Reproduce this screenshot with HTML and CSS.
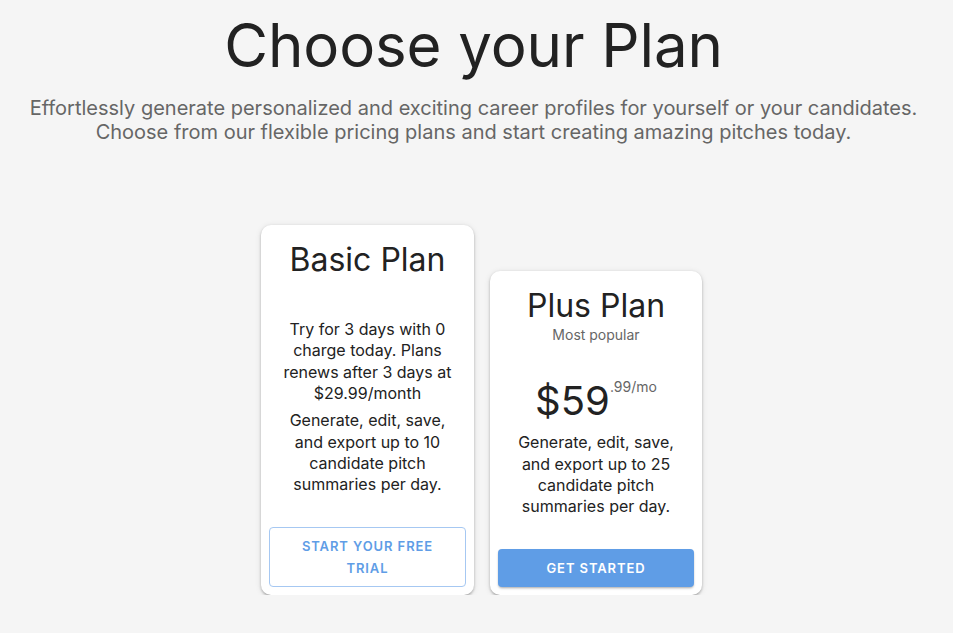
FILE: index.html
```html
<!DOCTYPE html>
<html lang="en">
<head>
<meta charset="utf-8">
<title>Choose your Plan</title>
<link rel="stylesheet" href="styles.css">
</head>
<body>
<main class="page">
  <h1 class="title">Choose your Plan</h1>
  <p class="subtitle">Effortlessly generate personalized and exciting career profiles for yourself or your candidates.<br>Choose from our flexible pricing plans and start creating amazing pitches today.</p>
  <section class="plans">
    <div class="card">
      <div class="card-content">
        <h2 class="plan-name">Basic Plan</h2>
        <p class="desc basic-first">Try for 3 days with 0 charge today. Plans renews after 3 days at $29.99/month</p>
        <p class="desc">Generate, edit, save, and export up to 10 candidate pitch summaries per day.</p>
      </div>
      <div class="card-actions">
        <button class="btn btn-outlined">START YOUR FREE TRIAL</button>
      </div>
    </div>
    <div class="card">
      <div class="card-content">
        <h2 class="plan-name">Plus Plan</h2>
        <div class="popular">Most popular</div>
        <div class="price"><span class="amount">$59</span><span class="cents">.99/mo</span></div>
        <p class="desc">Generate, edit, save, and export up to 25 candidate pitch summaries per day.</p>
      </div>
      <div class="card-actions">
        <button class="btn btn-contained">GET STARTED</button>
      </div>
    </div>
  </section>
</main>
</body>
</html>
```
FILE: styles.css
```css
html, body {
  margin: 0;
  padding: 0;
  background: #f5f5f5;
}
body {
  font-family: Inter, "Noto Sans", sans-serif;
  color: #212121;
}
.page {
  padding: 9px 6px 0 0;
  text-align: center;
}
.title {
  margin: 0;
  font-size: 60px;
  line-height: 72px;
  font-weight: 400;
  letter-spacing: -0.1px;
  color: #222;
}
.subtitle {
  margin: 15px 0 0;
  font-size: 20px;
  line-height: 24px;
  color: #666;
}
.plans {
  display: flex;
  justify-content: center;
  align-items: flex-end;
  gap: 16px;
  margin-top: 81px;
  padding-left: 16px;
}
.card {
  width: 213px;
  background: #fff;
  border-radius: 10px;
  box-shadow: 0 2px 3px -1px rgba(0,0,0,0.25), 0 1px 3px 0 rgba(0,0,0,0.14), 0 1px 6px 0 rgba(0,0,0,0.10);
  display: flex;
  flex-direction: column;
}
.card + .card { width: 212px; }
.card-content {
  padding: 16px 16px 23px;
}
.plan-name {
  margin: 0;
  font-size: 32px;
  line-height: 38px;
  font-weight: 400;
  color: #222;
}
.desc {
  margin: 0;
  font-size: 16px;
  line-height: 21.33px;
  color: #222;
}
.basic-first {
  margin-top: 40px;
  margin-bottom: 6px;
}
.popular {
  font-size: 14px;
  line-height: 20px;
  color: #666;
}
.price {
  margin: 28px 0 3px;
  height: 56px;
  display: flex;
  justify-content: center;
  align-items: flex-start;
}
.amount {
  font-size: 40px;
  line-height: 56px;
  color: #222;
}
.cents {
  font-size: 14px;
  line-height: 20px;
  color: #666;
  margin-top: 4px;
}
.card-actions {
  padding: 8px;
  display: flex;
}
.btn {
  flex: 1;
  font-family: Inter, "Noto Sans", sans-serif;
  font-size: 13px;
  font-weight: 600;
  letter-spacing: 0.9px;
  line-height: 22px;
  border-radius: 4px;
  cursor: pointer;
}
.btn-outlined {
  background: #fff;
  color: #5f9de6;
  border: 1px solid #a6c8f2;
  padding: 7px 16px;
}
.btn-contained {
  background: #5f9de6;
  color: #fff;
  border: none;
  padding: 8px 16px;
  box-shadow: 0 2px 3px -1px rgba(0,0,0,0.25), 0 1px 2px 0 rgba(0,0,0,0.12);
}
```
